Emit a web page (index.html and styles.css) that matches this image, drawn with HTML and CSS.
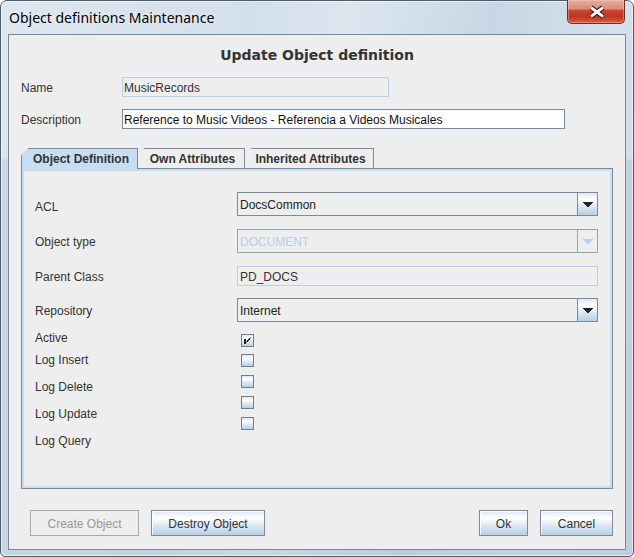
FILE: index.html
```html
<!DOCTYPE html>
<html>
<head>
<meta charset="utf-8">
<title>Object definitions Maintenance</title>
<link rel="stylesheet" href="styles.css">
</head>
<body>
<div class="window">
  <div class="titlebar">
    <span class="title">Object definitions Maintenance</span>
    <div class="close">
      <svg width="58" height="24" viewBox="0 0 58 24">
        <path d="M24.5 7.5 L36.5 16.5 M36.5 7.5 L24.5 16.5" stroke="#3d1a14" stroke-width="5" fill="none"/>
        <path d="M24.5 7.5 L36.5 16.5 M36.5 7.5 L24.5 16.5" stroke="#ffffff" stroke-width="2.8" fill="none"/>
      </svg>
    </div>
  </div>
  <div class="client">
    <div class="heading">Update Object definition</div>
    <div class="top-form">
      <span class="lbl lbl-mid">Name</span>
      <div class="field readonly name-field">MusicRecords</div>
      <span class="lbl lbl-mid">Description</span>
      <div class="field editable desc-field">Reference to Music Videos - Referencia a Videos Musicales</div>
    </div>
    <div class="tabs">
      <div class="tab tab-def selected">Object Definition</div>
      <div class="tab tab-own">Own Attributes</div>
      <div class="tab tab-inh">Inherited Attributes</div>
    </div>
    <div class="panel">
      <div class="rows">
        <div class="row">
          <span class="lbl lbl-low">ACL</span>
          <div class="combo">
            <span class="combo-text">DocsCommon</span>
            <span class="combo-btn">
              <svg width="10" height="5" viewBox="0 0 10 5"><path d="M0 0h10v1H0zM1 1h8v1H1zM2 2h6v1H2zM3 3h4v1H3zM4 4h2v1H4z" fill="#222"/></svg>
            </span>
          </div>
        </div>
        <div class="row">
          <span class="lbl lbl-mid">Object type</span>
          <div class="combo disabled">
            <span class="combo-text">DOCUMENT</span>
            <span class="combo-btn">
              <svg width="10" height="5" viewBox="0 0 10 5"><path d="M0 0h10v1H0zM1 1h8v1H1zM2 2h6v1H2zM3 3h4v1H3zM4 4h2v1H4z" fill="#b8cfe5"/></svg>
            </span>
          </div>
        </div>
        <div class="row">
          <span class="lbl lbl-mid">Parent Class</span>
          <div class="field readonly parent-field">PD_DOCS</div>
        </div>
        <div class="row row-repo">
          <span class="lbl lbl-mid">Repository</span>
          <div class="combo">
            <span class="combo-text">Internet</span>
            <span class="combo-btn">
              <svg width="10" height="5" viewBox="0 0 10 5"><path d="M0 0h10v1H0zM1 1h8v1H1zM2 2h6v1H2zM3 3h4v1H3zM4 4h2v1H4z" fill="#222"/></svg>
            </span>
          </div>
        </div>
      </div>
      <div class="checks">
        <div class="check-labels">
          <span class="lbl">Active</span>
          <span class="lbl">Log Insert</span>
          <span class="lbl">Log Delete</span>
          <span class="lbl">Log Update</span>
          <span class="lbl">Log Query</span>
        </div>
        <div class="check-boxes">
          <span class="cb">
            <svg width="11" height="11" viewBox="0 0 11 11">
              <path d="M2 4h2v5H2z" fill="#222"/>
              <path d="M8.5 2.5 L4.5 6.5 M8.5 3.5 L4.5 7.5" stroke="#222" stroke-width="1" fill="none"/>
            </svg>
          </span>
          <span class="cb"></span>
          <span class="cb"></span>
          <span class="cb"></span>
          <span class="cb"></span>
        </div>
      </div>
    </div>
    <div class="buttons">
      <div class="btn btn-disabled w-create">Create Object</div>
      <div class="btn w-destroy">Destroy Object</div>
      <div class="btn w-ok push-right">Ok</div>
      <div class="btn w-cancel">Cancel</div>
    </div>
  </div>
</div>
</body>
</html>
```

FILE: styles.css
```css
* {
  box-sizing: border-box;
}

html,
body {
  margin: 0;
  padding: 0;
}

body {
  width: 634px;
  height: 557px;
  overflow: hidden;
  background: #ffffff;
  font-family: "Liberation Sans", Arial, sans-serif;
  font-size: 12px;
  color: #333333;
}

.window {
  width: 634px;
  height: 557px;
  border: 1px solid #4f5d6b;
  border-radius: 7px 7px 5px 5px;
  background:
    linear-gradient(to bottom, rgba(255, 255, 255, 0) 0%, rgba(255, 255, 255, 0) 28%, rgba(150, 172, 195, 0.25) 29%, rgba(150, 172, 195, 0.25) 100%),
    linear-gradient(100deg, #dde7f0 0%, #d3dfea 35%, #dce6ef 48%, #c8d7e5 68%, #d4e0eb 85%, #ccdae7 100%);
  box-shadow: inset 0 0 0 1px rgba(255, 255, 255, 0.55);
  padding: 0 7px 6px 7px;
  display: flex;
  flex-direction: column;
}

.titlebar {
  height: 33px;
  display: flex;
  align-items: flex-start;
}

.title {
  margin-top: 7px;
  padding-left: 1px;
  font-family: "Noto Sans", "Open Sans", sans-serif;
  font-size: 14px;
  line-height: 20px;
  color: #000000;
  text-shadow: 0 0 6px rgba(255, 255, 255, 0.9);
}

.close {
  margin-left: auto;
  margin-top: -1px;
  margin-right: 1px;
  width: 58px;
  height: 24px;
  border: 1px solid #6e2c22;
  border-top: none;
  border-radius: 0 0 5px 5px;
  background: linear-gradient(to bottom, #e6ad9f 0%, #dc8d7c 38%, #c9452f 46%, #c03520 72%, #d2624b 100%);
  box-shadow: inset 0 0 0 1px rgba(255, 220, 210, 0.35);
  display: flex;
}

.close svg {
  display: block;
  margin-left: -1px;
}

.client {
  width: 618px;
  height: 516px;
  border: 1px solid #7b8794;
  background: #eeeeee;
  display: flex;
  flex-direction: column;
}

.heading {
  margin-top: 10px;
  height: 20px;
  line-height: 20px;
  text-align: center;
  font-family: "DejaVu Sans", sans-serif;
  font-weight: bold;
  font-size: 14px;
  color: #333333;
}

.top-form {
  margin-top: 12px;
  padding-left: 12px;
  display: grid;
  grid-template-columns: 101px auto;
  row-gap: 12px;
  align-items: center;
  justify-items: start;
}

.lbl {
  font-size: 12px;
  line-height: 14px;
  color: #333333;
  white-space: nowrap;
}

.lbl-mid {
  padding-top: 2px;
}

.field {
  height: 20px;
  line-height: 20px;
  padding: 0 1px;
  font-size: 12px;
  white-space: nowrap;
  overflow: hidden;
}

.field.readonly {
  border: 1px solid #b8cfe5;
  background: #eeeeee;
  color: #333333;
}

.field.editable {
  border: 1px solid #7a8a99;
  background: #ffffff;
  color: #111111;
}

.name-field {
  width: 267px;
}

.desc-field {
  width: 443px;
}

.parent-field {
  width: 361px;
  padding-left: 2px;
}

.tabs {
  margin-top: 19px;
  margin-left: 12px;
  height: 20px;
  display: flex;
  align-items: flex-start;
  position: relative;
  z-index: 1;
}

.tab {
  position: relative;
  height: 20px;
  border: 1px solid #7a8a99;
  border-bottom: none;
  background: #eeeeee;
  font-weight: bold;
  font-size: 12px;
  line-height: 20px;
  color: #333333;
  text-align: center;
  padding-left: 3px;
  white-space: nowrap;
  overflow: hidden;
  clip-path: polygon(7.5px 0, 100% 0, 100% 100%, 0 100%, 0 7.5px);
}

.tab::before {
  content: "";
  position: absolute;
  left: -1px;
  top: -1px;
  width: 7px;
  height: 7px;
  background: linear-gradient(to bottom right,
      transparent calc(50% - 0.7px),
      #7a8a99 calc(50% - 0.7px),
      #7a8a99 calc(50% + 0.7px),
      transparent calc(50% + 0.7px));
}

.tab.selected {
  height: 21px;
  background: #c8ddf2;
}

.tab-def {
  width: 117px;
}

.tab-own {
  width: 108px;
  margin-left: -1px;
}

.tab-inh {
  width: 130px;
  margin-left: -1px;
}

.panel {
  margin-left: 12px;
  width: 592px;
  height: 321px;
  border: 1px solid #7a8a99;
  box-shadow: inset 0 0 0 2px #c8ddf2;
  background: #eeeeee;
  padding: 23px 0 0 13px;
}

.rows {
  display: flex;
  flex-direction: column;
  gap: 13px;
}

.row {
  display: flex;
  align-items: center;
}

.row .lbl {
  width: 202px;
}

.lbl-low {
  padding-top: 5px;
}

.row-repo {
  margin-top: -1px;
}

.combo {
  width: 361px;
  height: 24px;
  border: 1px solid #7a8a99;
  background: #eeeeee;
  display: flex;
}

.combo-text {
  flex: 1;
  padding-left: 2px;
  line-height: 24px;
  font-size: 12px;
  color: #222222;
  white-space: nowrap;
  overflow: hidden;
}

.combo-btn {
  width: 20px;
  border-left: 1px solid #7a8a99;
  background: linear-gradient(to bottom, #dde8f3 0%, #ffffff 30%, #dde8f3 60%, #b8cfe5 100%);
  display: flex;
  align-items: center;
  justify-content: center;
}

.combo-btn svg {
  display: block;
}

.combo.disabled {
  border-color: #9aa3ab;
}

.combo.disabled .combo-text {
  color: #b8cfe5;
}

.combo.disabled .combo-btn {
  border-left-color: #9aa3ab;
  background: #eeeeee;
}

.checks {
  margin-top: 9px;
  display: grid;
  grid-template-columns: 202px auto;
  align-items: start;
}

.check-labels {
  display: flex;
  flex-direction: column;
  gap: 13px;
}

.check-labels .lbl:first-child {
  margin-bottom: -5px;
}

.check-boxes {
  padding-top: 3px;
  padding-left: 4px;
  display: flex;
  flex-direction: column;
  align-items: flex-start;
  gap: 8px;
}

.check-boxes .cb:first-child {
  margin-bottom: -1px;
}

.cb {
  width: 13px;
  height: 13px;
  border: 1px solid #6f7f8f;
  background: linear-gradient(to bottom, #dde8f3 0%, #ffffff 30%, #dde8f3 60%, #b8cfe5 100%);
  display: block;
}

.cb svg {
  display: block;
}

.buttons {
  margin-top: 21px;
  padding: 0 12px 0 21px;
  display: flex;
  gap: 12px;
}

.btn {
  height: 26px;
  border: 1px solid #7a8a99;
  background: linear-gradient(to bottom, #dde8f3 0%, #ffffff 30%, #dde8f3 60%, #b8cfe5 100%);
  box-shadow: inset 1px 1px 0 rgba(255, 255, 255, 0.8);
  font-size: 12px;
  line-height: 26px;
  text-align: center;
  color: #333333;
  white-space: nowrap;
  overflow: hidden;
}

.btn-disabled {
  border-color: #a8a8a8;
  background: #eeeeee;
  box-shadow: none;
  color: #999999;
}

.push-right {
  margin-left: auto;
}

.w-create {
  width: 109px;
}

.w-destroy {
  width: 114px;
}

.w-ok {
  width: 49px;
}

.w-cancel {
  width: 73px;
}
```
